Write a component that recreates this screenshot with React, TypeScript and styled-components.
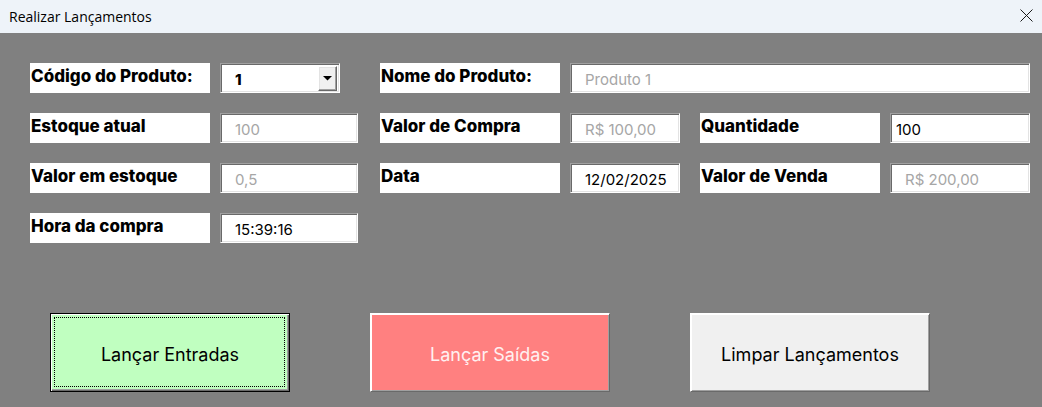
import { Fragment } from "react";
import styled, { createGlobalStyle } from "styled-components";

const GlobalStyle = createGlobalStyle`
  html, body {
    margin: 0;
    padding: 0;
    background: #808080;
  }
  * {
    box-sizing: border-box;
  }
`;

const Window = styled.div`
  width: 1042px;
  height: 407px;
  display: flex;
  flex-direction: column;
  background: #808080;
  overflow: hidden;
`;

const TitleBar = styled.div`
  height: 33px;
  flex-shrink: 0;
  display: flex;
  align-items: center;
  justify-content: space-between;
  padding: 0 4px 0 9px;
  background: #eef3f9;
  font-family: "Open Sans", "Noto Sans", sans-serif;
  font-size: 14px;
  color: #000;
`;

const Title = styled.span`
  padding-bottom: 1px;
`;

const CloseButton = styled.div`
  width: 24px;
  height: 24px;
  display: flex;
  align-items: center;
  justify-content: center;
  margin-bottom: 2px;
`;

const Body = styled.div`
  flex: 1;
  padding: 30px 0 0 30px;
  display: flex;
  flex-direction: column;
`;

const Form = styled.div`
  display: grid;
  grid-template-columns: 180px 10px 138px 22px 180px 10px 110px 20px 180px 10px 140px;
  grid-template-rows: repeat(4, 30px);
  row-gap: 20px;
`;

const Label = styled.div<{ $col: number; $row: number }>`
  grid-column: ${(p) => p.$col};
  grid-row: ${(p) => p.$row};
  background: #fff;
  padding: 3px 0 0 1px;
  font-family: Inter, "Noto Sans", sans-serif;
  font-weight: 800;
  font-size: 17px;
  line-height: 21px;
  color: #000;
  white-space: nowrap;
`;

const Field = styled.div<{
  $col: string;
  $row: number;
  $locked?: boolean;
  $pad?: number;
}>`
  grid-column: ${(p) => p.$col};
  grid-row: ${(p) => p.$row};
  background: #fff;
  border: 1px solid;
  border-color: #a0a0a0 #fff #fff #a0a0a0;
  box-shadow: inset 1px 1px #696969, inset -1px -1px #e3e3e3;
  padding: 6px 0 0 ${(p) => p.$pad ?? 14}px;
  font-family: Inter, "Noto Sans", sans-serif;
  font-size: 15px;
  line-height: 20px;
  color: ${(p) => (p.$locked ? "#a6a6a6" : "#000")};
  white-space: nowrap;
`;

const Combo = styled.div<{ $col: number; $row: number }>`
  grid-column: ${(p) => p.$col};
  grid-row: ${(p) => p.$row};
  width: 120px;
  display: flex;
  align-items: stretch;
  background: #fff;
  border: 1px solid;
  border-color: #a0a0a0 #fff #fff #a0a0a0;
  box-shadow: inset 1px 1px #696969, inset -1px -1px #e3e3e3;
  padding: 2px 2px 1px 2px;
`;

const ComboValue = styled.div`
  flex: 1;
  padding: 4px 0 0 12px;
  font-family: Inter, "Noto Sans", sans-serif;
  font-weight: 800;
  font-size: 15px;
  line-height: 20px;
  color: #000;
`;

const DropButton = styled.div`
  width: 19px;
  display: flex;
  align-items: center;
  justify-content: center;
  background: #f0f0f0;
  border: 1px solid;
  border-color: #fff #696969 #696969 #fff;
  box-shadow: inset -1px -1px #a0a0a0, inset 1px 1px #e3e3e3;
`;

const Actions = styled.div`
  display: flex;
  gap: 80px;
  margin: 70px 0 0 20px;
`;

const ActionButton = styled.div<{
  $bg: string;
  $color: string;
  $focused?: boolean;
}>`
  position: relative;
  width: 240px;
  height: 79px;
  display: flex;
  align-items: center;
  justify-content: center;
  padding-top: 4px;
  background: ${(p) => p.$bg};
  color: ${(p) => p.$color};
  font-family: Inter, "Noto Sans", sans-serif;
  font-size: 18px;
  border: 1px solid;
  border-color: ${(p) =>
    p.$focused ? "#000" : "#fff #696969 #696969 #fff"};
  box-shadow: ${(p) =>
    p.$focused
      ? "inset 1px 1px #fff, inset -1px -1px #696969, inset -2px -2px #a0a0a0"
      : "inset 1px 1px #fff, inset -1px -1px #a0a0a0"};

  &::after {
    content: "";
    display: ${(p) => (p.$focused ? "block" : "none")};
    position: absolute;
    inset: 3px 4px 4px 3px;
    border: 1px dotted #000;
  }
`;

const fields = [
  { label: "Estoque atual", value: "100", row: 2 },
  { label: "Valor em estoque", value: "0,5", row: 3 },
];

const App = () => (
  <>
    <GlobalStyle />
    <Window>
      <TitleBar>
        <Title>Realizar Lançamentos</Title>
        <CloseButton>
          <svg width="13" height="13" viewBox="0 0 13 13">
            <path d="M0.5 0.5 L12.5 12.5 M12.5 0.5 L0.5 12.5" stroke="#1a1a1a" strokeWidth="1" />
          </svg>
        </CloseButton>
      </TitleBar>
      <Body>
        <Form>
          <Label $col={1} $row={1}>Código do Produto:</Label>
          <Combo $col={3} $row={1}>
            <ComboValue>1</ComboValue>
            <DropButton>
              <svg width="9" height="5" viewBox="0 0 9 5">
                <path d="M0 0 H9 L4.5 4.5 Z" fill="#000" />
              </svg>
            </DropButton>
          </Combo>
          <Label $col={5} $row={1}>Nome do Produto:</Label>
          <Field $col="7 / 12" $row={1} $locked>Produto 1</Field>

          {fields.map((f) => (
            <Fragment key={f.label}>
              <Label $col={1} $row={f.row}>{f.label}</Label>
              <Field $col="3" $row={f.row} $locked>{f.value}</Field>
            </Fragment>
          ))}
          <Label $col={1} $row={4}>Hora da compra</Label>
          <Field $col="3" $row={4}>15:39:16</Field>

          <Label $col={5} $row={2}>Valor de Compra</Label>
          <Field $col="7" $row={2} $locked>R$ 100,00</Field>
          <Label $col={5} $row={3}>Data</Label>
          <Field $col="7" $row={3}>12/02/2025</Field>

          <Label $col={9} $row={2}>Quantidade</Label>
          <Field $col="11" $row={2} $pad={5}>100</Field>
          <Label $col={9} $row={3}>Valor de Venda</Label>
          <Field $col="11" $row={3} $locked>R$ 200,00</Field>
        </Form>
        <Actions>
          <ActionButton $bg="#c0ffc0" $color="#000" $focused>
            Lançar Entradas
          </ActionButton>
          <ActionButton $bg="#ff8080" $color="#fff0f0">
            Lançar Saídas
          </ActionButton>
          <ActionButton $bg="#f0f0f0" $color="#000">
            Limpar Lançamentos
          </ActionButton>
        </Actions>
      </Body>
    </Window>
  </>
);

export default App;
